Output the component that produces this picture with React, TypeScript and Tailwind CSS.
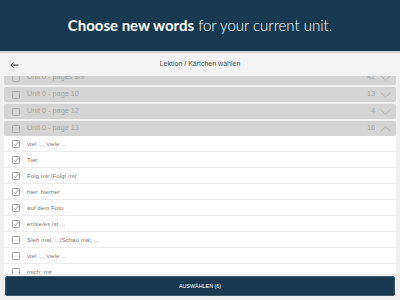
import React from "react";

const groups = [
  { label: "Unit 0 - pages 8/9", count: 42 },
  { label: "Unit 0 - page 10", count: 13 },
  { label: "Unit 0 - page 12", count: 4 },
];

const items = [
  { t: "viel ..., viele ...", c: true },
  { t: "Tier", c: true },
  { t: "Folg mir./Folgt mir.", c: true },
  { t: "hier; hierher", c: true },
  { t: "auf dem Foto", c: true },
  { t: "er/sie/es ist ...", c: true },
  { t: "Sieh mal, .../Schau mal, ...", c: false },
  { t: "viel ..., viele ...", c: false },
  { t: "mich; mir", c: false },
];

function Box({ checked }: { checked: boolean }) {
  return (
    <svg width="8" height="8" viewBox="0 0 8 8" className="shrink-0">
      <rect x="0.5" y="0.5" width="7" height="7" rx="0.8" fill="none" stroke="#8e8e8e" strokeWidth="0.8" />
      {checked && <path d="M1.9 4.1 L3.4 5.6 L6.8 1.9" fill="none" stroke="#7a7a7a" strokeWidth="0.8" />}
    </svg>
  );
}

function Chevron({ up }: { up?: boolean }) {
  return (
    <svg width="11" height="6" viewBox="0 0 11 6">
      <path d={up ? "M0.5 5.5 L5.5 0.8 L10.5 5.5" : "M0.5 0.5 L5.5 5.2 L10.5 0.5"} fill="none" stroke="#acacac" strokeWidth="0.8" />
    </svg>
  );
}

function GroupRow({ label, count, up }: { label: string; count: number; up?: boolean }) {
  return (
    <div className="h-[15px] mx-[4px] bg-[#d4d4d4] rounded-[2px] flex items-center pl-[8px] pr-[5px]">
      <svg width="8" height="8" viewBox="0 0 8 8" className="shrink-0">
        <rect x="0.5" y="0.5" width="7" height="7" rx="0.8" fill="none" stroke="#a4a4a4" strokeWidth="0.8" />
      </svg>
      <span className="ml-[7px] text-[7.3px] text-[#a6a6a6] flex-1">{label}</span>
      <span className="text-[7.3px] text-[#a6a6a6] mr-[5px]">{count}</span>
      <Chevron up={up} />
    </div>
  );
}

export default function App() {
  return (
    <div className="w-[400px] h-[300px] flex flex-col bg-[#efefef] overflow-hidden" style={{ fontFamily: "'Liberation Sans', Arial, sans-serif" }}>
      <div className="h-[51px] bg-[#173a50] flex items-center justify-center shrink-0">
        <span className="text-[15px] text-white" style={{ fontFamily: "Lato, 'Open Sans', sans-serif" }}>
          <span className="font-bold">Choose new words</span>
          <span className="font-light"> for your current unit.</span>
        </span>
      </div>
      <div className="h-[2px] bg-[#cfd5db] shrink-0" />
      <div className="h-[23px] bg-[#f3f3f3] flex items-center relative shrink-0">
        <svg width="9" height="6" viewBox="0 0 9 6" className="ml-[10px]">
          <path d="M8.5 3 H1 M3.2 0.6 L0.8 3 L3.2 5.4" fill="none" stroke="#333" strokeWidth="1" />
        </svg>
        <span className="absolute left-0 right-0 text-center text-[7px] text-[#555] pointer-events-none">Lektion / Kärtchen wählen</span>
      </div>
      <div className="flex-1 overflow-hidden">
        <div className="-mt-[6px] flex flex-col gap-[2px]">
          {groups.map((g) => (
            <GroupRow key={g.label} label={g.label} count={g.count} />
          ))}
          <div>
            <GroupRow label="Unit 0 - page 13" count={16} up />
            <div className="mx-[4px] bg-white">
              {items.map((it, i) => (
                <div key={i} className="h-[16px] border-b border-[#ececec] flex items-center pl-[8px]">
                  <Box checked={it.c} />
                  <span className="ml-[7px] text-[6.2px] text-[#7a7a7a]">{it.t}</span>
                </div>
              ))}
            </div>
          </div>
        </div>
      </div>
      <div className="h-[2px] shrink-0" />
      <div className="h-[20px] mx-[5px] bg-[#173a50] rounded-[2px] border border-[#3c5a6e] flex items-center justify-center shrink-0">
        <span className="text-[5.4px] text-white font-medium">AUSWÄHLEN (6)</span>
      </div>
      <div className="h-[4px] shrink-0" />
    </div>
  );
}
